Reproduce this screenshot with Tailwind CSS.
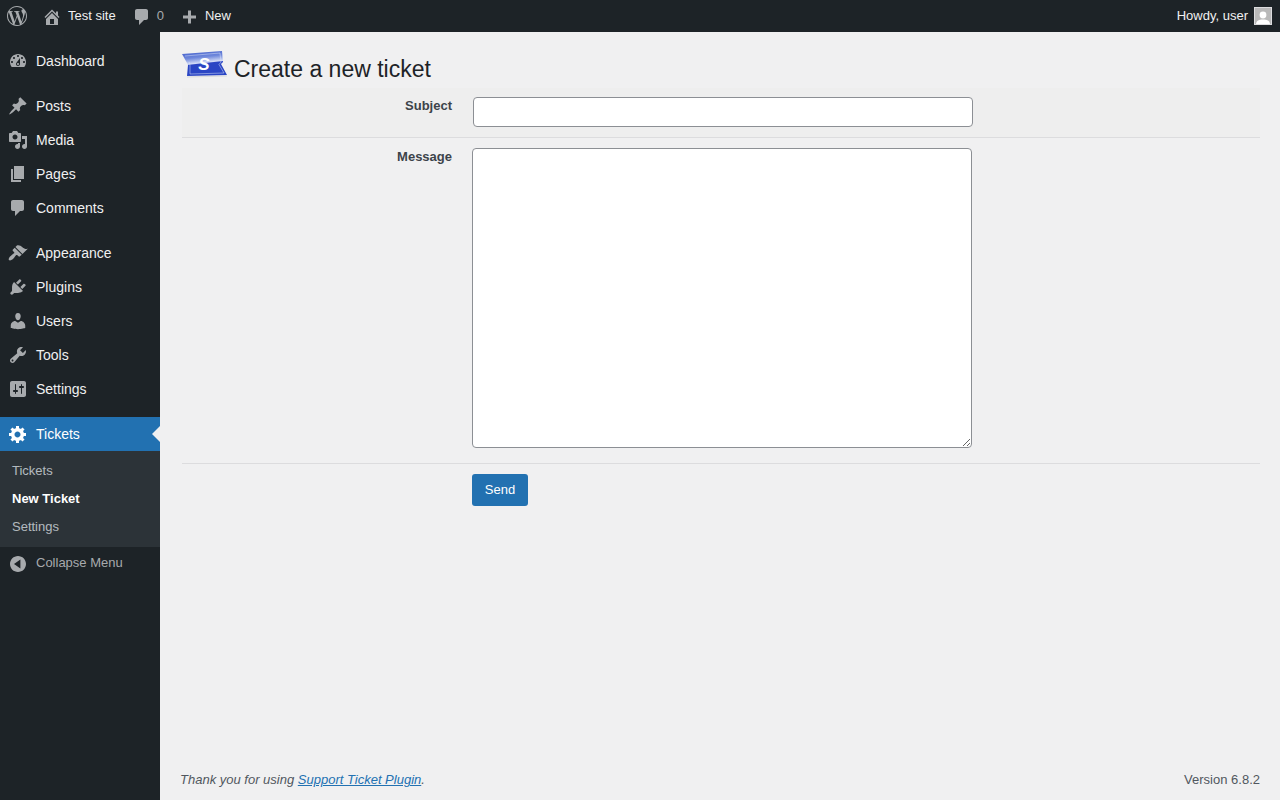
<!DOCTYPE html>
<html lang="en">
<head>
<meta charset="utf-8">
<title>Create a new ticket</title>
<script src="https://cdn.jsdelivr.net/npm/@tailwindcss/browser@4"></script>
</head>
<body class="bg-[#f0f0f1] font-['Liberation_Sans',Arial,sans-serif] text-[13px] text-[#3c434a] overflow-hidden">
<div class="w-[1280px] h-[800px] flex flex-col">
  <!-- admin bar -->
  <header class="h-8 shrink-0 bg-[#1d2327] text-[#f0f0f1] flex items-center justify-between">
    <div class="flex items-center h-8">
      <svg class="ml-[7px] w-5 h-5 fill-[#a7aaad]" viewBox="0 0 24 24"><path d="M21.469 6.825c.84 1.537 1.318 3.3 1.318 5.175 0 3.979-2.156 7.456-5.363 9.325l3.295-9.527c.615-1.54.82-2.771.82-3.864 0-.405-.026-.78-.07-1.11m-7.981.105c.647-.03 1.232-.105 1.232-.105.582-.075.514-.93-.067-.899 0 0-1.755.135-2.88.135-1.064 0-2.85-.15-2.85-.15-.585-.03-.661.855-.075.885 0 0 .54.061 1.125.09l1.68 4.605-2.37 7.08L5.354 6.9c.649-.03 1.234-.1 1.234-.1.585-.075.516-.93-.065-.896 0 0-1.746.138-2.874.138-.2 0-.438-.008-.69-.015C4.911 3.15 8.235 1.215 12 1.215c2.809 0 5.365 1.072 7.286 2.833-.046-.003-.091-.009-.141-.009-1.06 0-1.812.923-1.812 1.914 0 .89.513 1.643 1.06 2.531.411.72.89 1.643.89 2.977 0 .915-.354 1.994-.821 3.479l-1.075 3.585-3.9-11.61.001.014zM12 22.784c-1.059 0-2.081-.153-3.048-.437l3.237-9.406 3.315 9.087c.024.053.05.101.078.149-1.12.393-2.325.609-3.582.609M1.211 12c0-1.564.336-3.05.935-4.39L7.29 21.709C3.694 19.96 1.212 16.271 1.211 12M12 0C5.385 0 0 5.385 0 12s5.385 12 12 12 12-5.385 12-12S18.615 0 12 0"/></svg>
      <svg class="ml-[15px] mt-[2px] w-5 h-5 fill-[#a7aaad]" viewBox="0 0 20 20"><path d="M16 8.5l1.53 1.53-1.06 1.06L10 4.62l-6.47 6.47-1.06-1.06L10 2.5l4 4v-2h2v4zm-6-2.46l6 5.99V18H4v-5.97zM12 17v-5H8v5h4z"/></svg>
      <span class="ml-[6px] leading-8 -mt-[1px]">Test site</span>
      <svg class="ml-[16px] w-5 h-5 mt-[1px] fill-[#a7aaad]" viewBox="0 0 20 20"><path d="M5 2h9c1.1 0 2 .9 2 2v7c0 1.1-.9 2-2 2h-2l-5 5v-5H5c-1.1 0-2-.9-2-2V4c0-1.1.9-2 2-2z"/></svg>
      <span class="ml-[5px] leading-8 -mt-[1px] text-[#a7aaad]">0</span>
      <svg class="ml-[15px] mt-[1px] w-5 h-5 fill-[#a7aaad]" viewBox="0 0 20 20"><path d="M17 7v3h-5v5H9v-5H4V7h5V2h3v5h5z" transform="translate(0 1.5)"/></svg>
      <span class="ml-[6px] leading-8 -mt-[1px]">New</span>
    </div>
    <div class="flex items-center h-8 pr-2">
      <span class="leading-8 -mt-[1px]">Howdy, user</span>
      <span class="ml-[6px] w-[18px] h-[18px] bg-[#b9b9b9] border border-[#dcdcde] overflow-hidden flex items-end justify-center">
        <svg class="w-4 h-4 fill-white" viewBox="0 0 16 16"><circle cx="8" cy="7" r="3.4"/><path d="M1 16c.5-3.5 3-4.5 7-4.500s6.500 1 7 4.500z"/></svg>
      </span>
    </div>
  </header>

  <div class="flex-1 flex min-h-0">
    <!-- sidebar -->
    <nav class="w-40 shrink-0 bg-[#1d2327] text-[14px] text-[#f0f0f1] pt-3">
      <a class="h-[34px] flex items-center gap-[7px] pl-[8px]"><svg class="w-5 h-5 fill-[#a7aaad] ml-[0px]" viewBox="0 0 20 20"><path fill-rule="evenodd" d="M3.76 16h12.48c1.1-1.37 1.76-3.11 1.76-5 0-4.420-3.580-8-8-8s-8 3.580-8 8c0 1.890.66 3.630 1.760 5zM10 4c.55 0 1 .45 1 1s-.45 1-1 1-1-.45-1-1 .45-1 1-1zM6 6c.55 0 1 .45 1 1s-.45 1-1 1-1-.45-1-1 .45-1 1-1zm8 0c.55 0 1 .45 1 1s-.45 1-1 1-1-.45-1-1 .45-1 1-1zm-5.370 5.550L12 7v6c0 1.100-.9 2-2 2s-2-.9-2-2c0-.57.24-1.080.63-1.450zM4 10c.55 0 1 .45 1 1s-.45 1-1 1-1-.45-1-1 .45-1 1-1zm12 0c.55 0 1 .45 1 1s-.45 1-1 1-1-.45-1-1 .45-1 1-1zm-5 3c0-.55-.45-1-1-1s-1 .45-1 1 .45 1 1 1 1-.45 1-1z"/></svg><span class="ml-[1px]">Dashboard</span></a>
      <div class="h-[11px]"></div>
      <a class="h-[34px] flex items-center gap-[7px] pl-[8px]"><svg class="w-5 h-5 fill-[#a7aaad]" viewBox="0 0 20 20"><path d="M10.440 3.020l1.820-1.820 6.360 6.350-1.830 1.820c-1.050-.68-2.480-.57-3.410.36l-.75.75c-.92.93-1.040 2.350-.35 3.410l-1.830 1.820-2.410-2.410-2.800 2.790c-.42.42-3.380 2.710-3.800 2.290s1.860-3.390 2.280-3.810l2.790-2.790L4.100 9.360l1.830-1.820c1.050.69 2.480.57 3.400-.36l.75-.75c.93-.92 1.050-2.350.36-3.410z"/></svg><span class="ml-[1px]">Posts</span></a>
      <a class="h-[34px] flex items-center gap-[7px] pl-[8px]"><svg class="w-5 h-5 fill-[#a7aaad]" viewBox="0 0 20 20"><path fill-rule="evenodd" d="M13 11V4c0-.55-.45-1-1-1h-1.670L9 1H5L3.670 3H2c-.55 0-1 .45-1 1v7c0 .55.45 1 1 1h10c.55 0 1-.45 1-1zM7 4.500c1.380 0 2.500 1.120 2.500 2.500S8.380 9.500 7 9.500 4.500 8.380 4.500 7 5.620 4.500 7 4.500zM14 6h5v10.500c0 1.380-1.120 2.500-2.500 2.500S14 17.880 14 16.500s1.120-2.500 2.500-2.500c.17 0 .34.02.5.05V9h-3V6zm-4 8.050V13h2v3.500c0 1.380-1.120 2.500-2.500 2.500S7 17.880 7 16.500 8.120 14 9.500 14c.17 0 .34.02.5.05z"/></svg><span class="ml-[1px]">Media</span></a>
      <a class="h-[34px] flex items-center gap-[7px] pl-[8px]"><svg class="w-5 h-5 fill-[#a7aaad]" viewBox="0 0 20 20"><path d="M6 15V2h10v13H6zm-1 1h8v2H3V5h2v11z"/></svg><span class="ml-[1px]">Pages</span></a>
      <a class="h-[34px] flex items-center gap-[7px] pl-[8px]"><svg class="w-5 h-5 fill-[#a7aaad]" viewBox="0 0 20 20"><path d="M5 2h9c1.100 0 2 .9 2 2v7c0 1.100-.9 2-2 2h-2l-5 5v-5H5c-1.100 0-2-.9-2-2V4c0-1.100.9-2 2-2z"/></svg><span class="ml-[1px]">Comments</span></a>
      <div class="h-[11px]"></div>
      <a class="h-[34px] flex items-center gap-[7px] pl-[8px]"><svg class="w-5 h-5 fill-[#a7aaad]" viewBox="0 0 20 20"><path d="M14.480 11.060L7.410 3.990l1.500-1.500c.5-.56 2.300-.47 3.510.32 1.210.8 1.430 1.280 2.910 2.100 1.180.64 2.450 1.260 4.450.85zm-.71.71L6.700 4.700 4.930 6.470c-.39.39-.39 1.020 0 1.410l1.060 1.060c.39.39.39 1.030 0 1.420-.6.6-1.430 1.110-2.210 1.690-.35.26-.7.53-1.010.84C1.430 13.710 0 16.060 1 17.070c1 1 3.360-.43 4.460-1.540.31-.31.58-.66.84-1.010.58-.78 1.090-1.610 1.690-2.210.39-.39 1.030-.39 1.420 0l1.060 1.060c.39.39 1.020.39 1.410 0z"/></svg><span class="ml-[1px]">Appearance</span></a>
      <a class="h-[34px] flex items-center gap-[7px] pl-[8px]"><svg class="w-5 h-5 fill-[#a7aaad]" viewBox="0 0 20 20"><path d="M13.110 4.360L9.870 7.600 8 5.730l3.240-3.240c.35-.34 1.050-.2 1.560.32.52.51.66 1.210.31 1.550zm-8 1.770l.91-1.120 9.010 9.010-1.190.84c-.71.71-2.630 1.160-3.820 1.160H6.140L4.900 17.260c-.59.59-1.540.59-2.120 0-.59-.58-.59-1.530 0-2.120l1.240-1.240v-3.880c0-1.130.4-3.190 1.090-3.890zm7.260 3.970l3.240-3.240c.34-.35 1.040-.21 1.550.31.52.51.66 1.210.31 1.550l-3.240 3.250z"/></svg><span class="ml-[1px]">Plugins</span></a>
      <a class="h-[34px] flex items-center gap-[7px] pl-[8px]"><svg class="w-5 h-5 fill-[#a7aaad]" viewBox="0 0 20 20"><path d="M10 9.250c-2.270 0-2.730-3.440-2.730-3.440C7 4.020 7.820 2 9.970 2c2.160 0 2.980 2.020 2.710 3.810 0 0-.41 3.440-2.680 3.440zm0 2.570L12.720 10c2.390 0 4.520 2.330 4.520 4.530v2.490s-3.650 1.130-7.240 1.130c-3.650 0-7.240-1.130-7.240-1.130v-2.490c0-2.250 1.940-4.480 4.470-4.480z"/></svg><span class="ml-[1px]">Users</span></a>
      <a class="h-[34px] flex items-center gap-[7px] pl-[8px]"><svg class="w-5 h-5 fill-[#a7aaad]" viewBox="0 0 20 20"><path fill-rule="evenodd" d="M16.680 9.770c-1.340 1.340-3.300 1.670-4.950.99l-5.410 6.520c-.99.99-2.590.99-3.580 0s-.99-2.590 0-3.570l6.520-5.420c-.68-1.650-.35-3.610.99-4.950 1.280-1.280 3.120-1.620 4.720-1.060l-2.890 2.890 2.820 2.820 2.860-2.870c.53 1.580.18 3.390-1.080 4.650zM3.810 16.210c.4.39 1.040.39 1.430 0 .4-.4.4-1.040 0-1.430-.39-.4-1.030-.4-1.430 0-.39.39-.39 1.030 0 1.430z"/></svg><span class="ml-[1px]">Tools</span></a>
      <a class="h-[34px] flex items-center gap-[7px] pl-[8px]"><svg class="w-5 h-5 fill-[#a7aaad]" viewBox="0 0 20 20"><path fill-rule="evenodd" d="M18 16V4c0-1.100-.9-2-2-2H4c-1.100 0-2 .9-2 2v12c0 1.100.9 2 2 2h12c1.100 0 2-.9 2-2zM8 11h1c.55 0 1 .45 1 1s-.45 1-1 1H8v1.500c0 .28-.22.5-.5.5s-.5-.22-.5-.5V13H6c-.55 0-1-.45-1-1s.45-1 1-1h1V5.500c0-.28.22-.5.5-.5s.5.22.5.5V11zm5-2h-1c-.55 0-1-.45-1-1s.45-1 1-1h1V5.500c0-.28.22-.5.5-.5s.5.22.5.5V7h1c.55 0 1 .45 1 1s-.45 1-1 1h-1v5.500c0 .28-.22.5-.5.5s-.5-.22-.5-.5V9z"/></svg><span class="ml-[1px]">Settings</span></a>
      <div class="h-[11px]"></div>
      <a class="relative h-[34px] flex items-center gap-[7px] pl-[8px] bg-[#2271b1] text-white"><svg class="w-5 h-5 fill-white" viewBox="0 0 20 20"><path fill-rule="evenodd" d="M18 12h-2.180c-.17.7-.44 1.350-.81 1.930l1.540 1.540-2.100 2.100-1.540-1.540c-.58.36-1.230.63-1.910.79V19H8v-2.180c-.68-.16-1.330-.43-1.910-.79l-1.540 1.540-2.120-2.120 1.540-1.540c-.36-.58-.63-1.230-.79-1.910H1V9.030h2.170c.16-.7.44-1.350.8-1.940L2.430 5.550l2.100-2.100 1.540 1.540c.58-.37 1.240-.64 1.930-.81V2h3v2.180c.68.16 1.330.43 1.910.79l1.540-1.540 2.120 2.120-1.540 1.540c.36.59.64 1.240.8 1.940H18V12zm-8.500 1.500c1.660 0 3-1.340 3-3s-1.340-3-3-3-3 1.340-3 3 1.340 3 3 3z"/></svg><span class="ml-[1px]">Tickets</span>
        <span class="absolute right-0 top-[9px] w-0 h-0 border-y-8 border-y-transparent border-r-8 border-r-[#f0f0f1]"></span>
      </a>
      <div class="bg-[#2c3338] pt-[6px] pb-[6px] text-[13px] text-[#f0f6fc]/70">
        <a class="h-[28px] flex items-center pl-3">Tickets</a>
        <a class="h-[28px] flex items-center pl-3 font-bold text-white">New Ticket</a>
        <a class="h-[28px] flex items-center pl-3">Settings</a>
      </div>
      <div class="flex items-start pt-[7px] pl-[10px] text-[13px] text-[#a7aaad] leading-[18px]">
        <svg class="w-4 h-4 mt-[2px] fill-[#a7aaad]" viewBox="0 0 20 20"><path fill-rule="evenodd" d="M10 20c5.520 0 10-4.480 10-10S15.520 0 10 0 0 4.480 0 10s4.480 10 10 10zm3-4.500V4.500L5 10z"/></svg>
        <span class="ml-[10px]">Collapse Menu</span>
      </div>
    </nav>

    <!-- main -->
    <main class="flex-1 min-w-0 flex flex-col pl-[22px] pr-5">
      <div class="flex items-start h-[56px]">
        <svg class="w-[46px] h-[28px] mt-[18px] shrink-0" viewBox="0 0 46 28">
          <defs>
            <linearGradient id="t" x1="0.1" y1="0" x2="0.3" y2="1"><stop offset="0" stop-color="#3f5cc9"/><stop offset="0.3" stop-color="#6f88dc"/><stop offset="0.52" stop-color="#d5ddf6"/><stop offset="0.56" stop-color="#2a45c4"/><stop offset="1" stop-color="#2a45c4"/></linearGradient>
          </defs>
          <polygon points="5,26.500 45,25.500 45,26.500 5,27.500" fill="#d9dadb"/>
          <polygon points="0,4 40,1 41,12 39,14 45,25 5,26 6,15 5,13" fill="url(#t)"/>
          <polyline points="3,6 38,3 39,12 37,14.500 42,23 8,24 8,15 7,12" fill="none" stroke="#dbe2f8" stroke-opacity="0.7" stroke-width="0.7"/>
          <text x="22" y="19.500" text-anchor="middle" font-size="17" font-weight="700" font-style="italic" fill="#fff">S</text>
        </svg>
        <h1 class="ml-[6px] mt-[23px] text-[23px] leading-[29px] text-[#1d2327] font-normal">Create a new ticket</h1>
      </div>
      <div class="w-[1078px] flex flex-col">
        <div class="h-[50px] flex bg-[#eeeeee] border-b border-[#dcdcde]">
          <label class="w-[270px] pt-[10px] text-right font-bold leading-4">Subject</label>
          <div class="pl-[21px] pt-[9px]"><input type="text" class="block w-[500px] h-[30px] bg-white border border-[#8c8f94] rounded-[4px]"></div>
        </div>
        <div class="h-[326px] flex border-b border-[#dcdcde]">
          <label class="w-[270px] pt-[11px] text-right font-bold leading-4">Message</label>
          <div class="pl-[20px] pt-[10px]"><textarea class="block w-[500px] h-[300px] bg-white border border-[#8c8f94] rounded-[4px]"></textarea></div>
        </div>
        <div class="flex pt-[10px] pl-[290px]">
          <button class="w-[56px] h-[32px] bg-[#2271b1] text-white rounded-[3px] text-[13px]">Send</button>
        </div>
      </div>
      <footer class="mt-auto w-[1080px] -ml-[2px] h-[31px] flex justify-between text-[#50575e]">
        <p class="italic leading-[18px] pt-[2px]">Thank you for using <a class="text-[#2271b1] underline">Support Ticket Plugin</a>.</p>
        <p class="leading-[18px] pt-[2px]">Version 6.8.2</p>
      </footer>
    </main>
  </div>
</div>
</body>
</html>
